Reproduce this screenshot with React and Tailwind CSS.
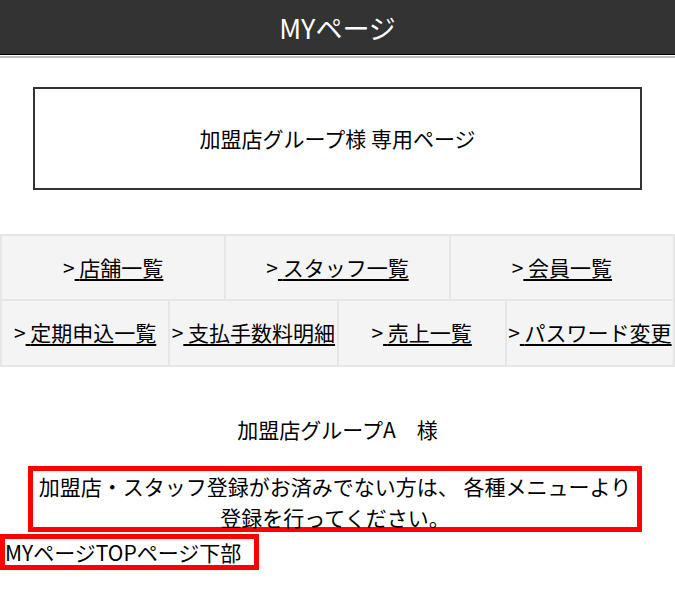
import React from "react";

const rowOne = ["店舗一覧", "スタッフ一覧", "会員一覧"];
const rowTwo = ["定期申込一覧", "支払手数料明細", "売上一覧", "パスワード変更"];

const MenuCell = ({ label }) => (
  <div className="flex-1 bg-[#f4f4f4] flex items-center justify-center whitespace-nowrap">
    <span>{">"}</span>
    <a href="#" className="underline underline-offset-[3px] text-black">
      {"\u00a0"}
      {label}
    </a>
  </div>
);

const App = () => {
  return (
    <div
      className="min-h-screen bg-white text-black"
      style={{ fontFamily: '"Noto Sans CJK JP", "Noto Sans", sans-serif' }}
    >
      {/* header */}
      <div className="h-[55px] bg-[#333333] border-b border-black flex items-center justify-center">
        <h1 className="text-white text-[27px] leading-none">MYページ</h1>
      </div>
      <div className="mt-px h-[2px] bg-[#bdbdbd]" />

      {/* title box */}
      <div className="mx-[33px] mt-[29px] h-[103px] border-2 border-[#333333] flex items-center justify-center">
        <p className="text-[21px]">加盟店グループ様 専用ページ</p>
      </div>

      {/* menu */}
      <div className="mt-[44px] bg-[#e6e6e6] p-[2px] flex flex-col gap-[2px] text-[21px]">
        <div className="flex gap-[2px] h-[63px]">
          {rowOne.map((l) => (
            <MenuCell key={l} label={l} />
          ))}
        </div>
        <div className="flex gap-[2px] h-[64px]">
          {rowTwo.map((l) => (
            <MenuCell key={l} label={l} />
          ))}
        </div>
      </div>

      <p className="mt-[48px] text-center text-[21px] leading-[28px]">加盟店グループA　様</p>

      <div className="mt-[23px] ml-[28px] w-[614px] h-[66px] border-[5px] border-[#ff0000] text-center text-[21px] leading-[31px]">
        加盟店・スタッフ登録がお済みでない方は、 各種メニューより
        <br />
        登録を行ってください。
      </div>

      <div className="mt-[2px] w-[259px] h-[36px] border-[5px] border-[#ff0000] text-[21px] leading-[26px] whitespace-nowrap">
        MYページTOPページ下部
      </div>
    </div>
  );
};

export default App;
